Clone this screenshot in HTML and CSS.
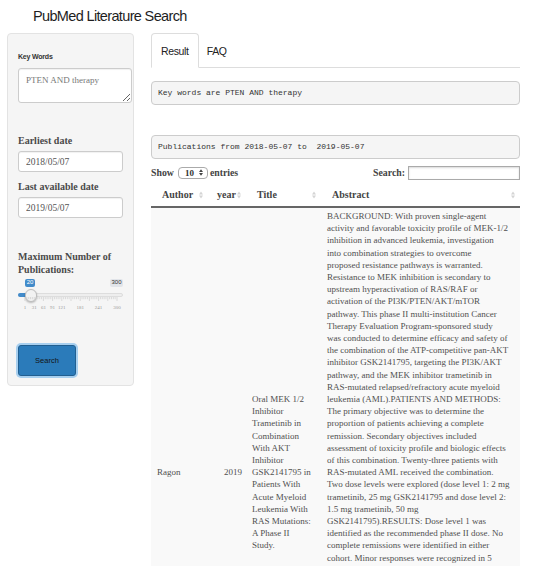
FILE: index.html
```html
<!DOCTYPE html>
<html>
<head>
<meta charset="utf-8">
<title>PubMed Literature Search</title>
<link rel="stylesheet" href="styles.css">
</head>
<body>
<div class="title">PubMed Literature Search</div>
<div class="layout">
  <aside class="well">
    <label class="lbl-sans">Key Words</label>
    <textarea class="kw">PTEN AND therapy</textarea>
    <label class="lbl first">Earliest date</label>
    <input class="date" type="text" value="2018/05/07">
    <label class="lbl">Last available date</label>
    <input class="date" type="text" value="2019/05/07">
    <label class="lbl max">Maximum Number of Publications:</label>
    <div class="slider">
      <span class="badge from">20</span>
      <span class="badge maxv">300</span>
      <span class="track"></span>
      <span class="bar"></span>
      <span class="handle"></span>
      <svg class="grid" width="105" height="14" viewBox="0 0 105 14">
        <g stroke="#cfcfcf" stroke-width="0.7">
          <line x1="7" y1="0" x2="7" y2="4"/><line x1="8.84" y1="0" x2="8.84" y2="2.2"/><line x1="10.68" y1="0" x2="10.68" y2="2.2"/><line x1="12.52" y1="0" x2="12.52" y2="2.2"/><line x1="14.36" y1="0" x2="14.36" y2="2.2"/>
          <line x1="16.2" y1="0" x2="16.2" y2="4"/><line x1="18.04" y1="0" x2="18.04" y2="2.2"/><line x1="19.88" y1="0" x2="19.88" y2="2.2"/><line x1="21.72" y1="0" x2="21.72" y2="2.2"/><line x1="23.56" y1="0" x2="23.56" y2="2.2"/>
          <line x1="25.4" y1="0" x2="25.4" y2="4"/><line x1="27.24" y1="0" x2="27.24" y2="2.2"/><line x1="29.08" y1="0" x2="29.08" y2="2.2"/><line x1="30.92" y1="0" x2="30.92" y2="2.2"/><line x1="32.76" y1="0" x2="32.76" y2="2.2"/>
          <line x1="34.6" y1="0" x2="34.6" y2="4"/><line x1="36.44" y1="0" x2="36.44" y2="2.2"/><line x1="38.28" y1="0" x2="38.28" y2="2.2"/><line x1="40.12" y1="0" x2="40.12" y2="2.2"/><line x1="41.96" y1="0" x2="41.96" y2="2.2"/>
          <line x1="43.8" y1="0" x2="43.8" y2="4"/><line x1="45.64" y1="0" x2="45.64" y2="2.2"/><line x1="47.48" y1="0" x2="47.48" y2="2.2"/><line x1="49.32" y1="0" x2="49.32" y2="2.2"/><line x1="51.16" y1="0" x2="51.16" y2="2.2"/>
          <line x1="53" y1="0" x2="53" y2="4"/><line x1="54.84" y1="0" x2="54.84" y2="2.2"/><line x1="56.68" y1="0" x2="56.68" y2="2.2"/><line x1="58.52" y1="0" x2="58.52" y2="2.2"/><line x1="60.36" y1="0" x2="60.36" y2="2.2"/>
          <line x1="62.2" y1="0" x2="62.2" y2="4"/><line x1="64.04" y1="0" x2="64.04" y2="2.2"/><line x1="65.88" y1="0" x2="65.88" y2="2.2"/><line x1="67.72" y1="0" x2="67.72" y2="2.2"/><line x1="69.56" y1="0" x2="69.56" y2="2.2"/>
          <line x1="71.4" y1="0" x2="71.4" y2="4"/><line x1="73.24" y1="0" x2="73.24" y2="2.2"/><line x1="75.08" y1="0" x2="75.08" y2="2.2"/><line x1="76.92" y1="0" x2="76.92" y2="2.2"/><line x1="78.76" y1="0" x2="78.76" y2="2.2"/>
          <line x1="80.6" y1="0" x2="80.6" y2="4"/><line x1="82.44" y1="0" x2="82.44" y2="2.2"/><line x1="84.28" y1="0" x2="84.28" y2="2.2"/><line x1="86.12" y1="0" x2="86.12" y2="2.2"/><line x1="87.96" y1="0" x2="87.96" y2="2.2"/>
          <line x1="89.8" y1="0" x2="89.8" y2="4"/><line x1="91.64" y1="0" x2="91.64" y2="2.2"/><line x1="93.48" y1="0" x2="93.48" y2="2.2"/><line x1="95.32" y1="0" x2="95.32" y2="2.2"/><line x1="97.16" y1="0" x2="97.16" y2="2.2"/>
          <line x1="99" y1="0" x2="99" y2="4"/>
        </g>
        <g class="gl" text-anchor="middle">
          <text x="7" y="12">1</text>
          <text x="16.2" y="12">31</text>
          <text x="25.4" y="12">61</text>
          <text x="34.6" y="12">91</text>
          <text x="43.8" y="12">121</text>
          <text x="62.2" y="12">181</text>
          <text x="80.6" y="12">241</text>
          <text x="99" y="12">300</text>
        </g>
      </svg>
    </div>
    <button class="btn" type="button">Search</button>
  </aside>

  <main class="main">
    <nav class="tabs">
      <span class="tab active">Result</span>
      <span class="tab faq">FAQ</span>
    </nav>
    <pre class="verb">Key words are PTEN AND therapy</pre>
    <pre class="verb v2">Publications from 2018-05-07 to  2019-05-07</pre>
    <div class="dt-top">
      <label class="show">Show <span class="sel">10<svg width="4" height="7" viewBox="0 0 4 7"><polygon points="0,3 2,0.3 4,3" fill="#444"/><polygon points="0,4 2,6.7 4,4" fill="#444"/></svg></span> entries</label>
      <label class="search">Search: <input class="sbox" type="text"></label>
    </div>
    <table class="dt">
      <colgroup>
        <col class="c-author">
        <col class="c-year">
        <col class="c-title">
        <col class="c-abs">
      </colgroup>
      <thead>
        <tr>
          <th><div class="th-in"><span>Author</span><svg class="si" width="4" height="8" viewBox="0 0 4 8"><polygon points="0,3.4 2,0.6 4,3.4"/><polygon points="0,4.6 2,7.4 4,4.6"/></svg></div></th>
          <th class="th-year"><div class="th-in"><span>year</span><svg class="si" width="4" height="8" viewBox="0 0 4 8"><polygon points="0,3.4 2,0.6 4,3.4"/><polygon points="0,4.6 2,7.4 4,4.6"/></svg></div></th>
          <th><div class="th-in"><span>Title</span><svg class="si" width="4" height="8" viewBox="0 0 4 8"><polygon points="0,3.4 2,0.6 4,3.4"/><polygon points="0,4.6 2,7.4 4,4.6"/></svg></div></th>
          <th><div class="th-in"><span>Abstract</span><svg class="si" width="4" height="8" viewBox="0 0 4 8"><polygon points="0,3.4 2,0.6 4,3.4"/><polygon points="0,4.6 2,7.4 4,4.6"/></svg></div></th>
        </tr>
      </thead>
      <tbody>
        <tr class="odd">
          <td>Ragon</td>
          <td class="num">2019</td>
          <td class="ttl">Oral MEK 1/2 Inhibitor Trametinib in Combination With AKT Inhibitor GSK2141795 in Patients With Acute Myeloid Leukemia With RAS Mutations: A Phase II Study.</td>
          <td class="abs">BACKGROUND: With proven single-agent<br>
activity and favorable toxicity profile of MEK-1/2<br>
inhibition in advanced leukemia, investigation<br>
into combination strategies to overcome<br>
proposed resistance pathways is warranted.<br>
Resistance to MEK inhibition is secondary to<br>
upstream hyperactivation of RAS/RAF or<br>
activation of the PI3K/PTEN/AKT/mTOR<br>
pathway. This phase II multi-institution Cancer<br>
Therapy Evaluation Program-sponsored study<br>
was conducted to determine efficacy and safety of<br>
the combination of the ATP-competitive pan-AKT<br>
inhibitor GSK2141795, targeting the PI3K/AKT<br>
pathway, and the MEK inhibitor trametinib in<br>
RAS-mutated relapsed/refractory acute myeloid<br>
leukemia (AML).PATIENTS AND METHODS:<br>
The primary objective was to determine the<br>
proportion of patients achieving a complete<br>
remission. Secondary objectives included<br>
assessment of toxicity profile and biologic effects<br>
of this combination. Twenty-three patients with<br>
RAS-mutated AML received the combination.<br>
Two dose levels were explored (dose level 1: 2 mg<br>
trametinib, 25 mg GSK2141795 and dose level 2:<br>
1.5 mg trametinib, 50 mg<br>
GSK2141795).RESULTS: Dose level 1 was<br>
identified as the recommended phase II dose. No<br>
complete remissions were identified in either<br>
cohort. Minor responses were recognized in 5<br>
patients (22%). The most common grade 3 or<br>
higher treatment-related adverse events were<br>
febrile neutropenia, diarrhea, rash and<br>
mucositis. Pharmacodynamic analysis showed<br>
inhibition of ERK and AKT phosphorylation in a<br>
subset of patients, although this did not<br>
correlate with clinical response.CONCLUSION:<br>
The combination of trametinib and GSK2141795<br>
was associated with substantial toxicity and<br>
did not demonstrate clinical activity sufficient<br>
to warrant further investigation in patients<br>
with RAS-mutated relapsed or refractory acute<br>
myeloid leukemia. Further study of this<br>
combination in AML is not recommended.</td>
        </tr>
      </tbody>
    </table>
  </main>
</div>
</body>
</html>
```

FILE: styles.css
```css
* { box-sizing: border-box; }

html, body {
  margin: 0;
  padding: 0;
  background: #ffffff;
}

body {
  font-family: "Liberation Serif", "DejaVu Serif", serif;
  color: #555555;
}

.title {
  font-family: "Liberation Sans", Arial, sans-serif;
  font-size: 14.5px;
  letter-spacing: -0.65px;
  line-height: 17px;
  color: #1e1e1e;
  padding: 7.5px 0 0 33px;
  height: 33.3px;
}

.layout {
  display: flex;
  align-items: flex-start;
  gap: 17px;
  padding-left: 7px;
}

/* ---------- sidebar ---------- */
.well {
  width: 127px;
  flex: none;
  background: #f5f5f5;
  border: 1px solid #e3e3e3;
  border-radius: 4px;
  padding: 18px 10px 9px 10px;
  display: flex;
  flex-direction: column;
  align-items: flex-start;
}

.lbl-sans {
  display: block;
  font-family: "Liberation Sans", Arial, sans-serif;
  font-weight: bold;
  font-size: 7px;
  letter-spacing: -0.2px;
  line-height: 9px;
  color: #333333;
  margin-bottom: 6.5px;
}

.kw {
  display: block;
  width: 114px;
  height: 35px;
  margin: 0;
  padding: 6px 7px;
  border: 1px solid #cccccc;
  border-radius: 3px;
  background: #ffffff;
  font-family: "Liberation Serif", serif;
  font-size: 9px;
  line-height: 11px;
  color: #777777;
  box-shadow: inset 0 1px 1px rgba(0,0,0,0.06);
}

.lbl {
  display: block;
  font-weight: bold;
  font-size: 10px;
  line-height: 12px;
  color: #4a4a4a;
  margin-top: 8.5px;
  margin-bottom: 4px;
}

.lbl.first {
  margin-top: 32.5px;
  margin-bottom: 3.5px;
}

.lbl.max {
  margin-top: 32.5px;
  line-height: 12.7px;
  margin-bottom: 3px;
  width: 105px;
}

.date {
  display: block;
  width: 105px;
  height: 21.5px;
  margin: 0;
  padding: 0 7px;
  border: 1px solid #cccccc;
  border-radius: 3px;
  background: #ffffff;
  font-family: "Liberation Serif", serif;
  font-size: 9.5px;
  color: #555555;
  box-shadow: inset 0 1px 1px rgba(0,0,0,0.06);
}

/* slider */
.slider {
  position: relative;
  width: 105px;
  height: 33px;
  flex: none;
}

.badge {
  position: absolute;
  top: 0;
  height: 7.5px;
  font-family: "Liberation Sans", Arial, sans-serif;
  font-size: 6px;
  line-height: 7.5px;
  text-align: center;
  border-radius: 2px;
}

.badge.from {
  left: 7px;
  width: 10px;
  background: #428bca;
  color: #ffffff;
}

.badge.maxv {
  left: 92px;
  width: 13px;
  background: #e1e4e9;
  color: #333333;
}

.track {
  position: absolute;
  left: 0;
  top: 13.3px;
  width: 105px;
  height: 4px;
  background: #eeeeee;
  border: 1px solid #dddddd;
  border-radius: 3px;
}

.bar {
  position: absolute;
  left: 0;
  top: 13.3px;
  width: 13px;
  height: 4px;
  background: #428bca;
  border-radius: 2px 0 0 2px;
}

.handle {
  position: absolute;
  left: 7px;
  top: 10px;
  width: 12.3px;
  height: 12.3px;
  border-radius: 50%;
  background: #f2f2f2;
  border: 1px solid #bdbdbd;
  box-shadow: 0 1px 2px rgba(0,0,0,0.25);
}

.grid {
  position: absolute;
  left: 0;
  top: 18px;
}

.gl {
  font-family: "Liberation Serif", serif;
  font-size: 5px;
  fill: #999999;
}

.btn {
  display: block;
  margin-top: 32.6px;
  width: 58px;
  height: 31px;
  padding: 0;
  background: #2b7bba;
  border: 1px solid #215f91;
  border-radius: 3px;
  box-shadow: 0 0 0 2px rgba(102,175,233,0.55);
  font-family: "Liberation Sans", Arial, sans-serif;
  font-size: 7.5px;
  color: #151515;
}

/* ---------- main ---------- */
.main {
  width: 369px;
  flex: none;
}

.tabs {
  display: flex;
  border-bottom: 1px solid #dddddd;
  height: 35px;
}

.tab {
  font-family: "Liberation Sans", Arial, sans-serif;
  font-size: 10.5px;
  letter-spacing: -0.35px;
  line-height: 12px;
  color: #222222;
  padding: 11px 9px 10px 9px;
  border: 1px solid transparent;
  border-radius: 4px 4px 0 0;
  height: 35px;
}

.tab.active {
  border-color: #dddddd;
  border-bottom-color: #ffffff;
  background: #ffffff;
}

.tab.faq {
  padding-left: 7px;
}

.verb {
  margin: 12.4px 0 0 0;
  height: 24px;
  padding: 6px 6px;
  background: #f5f5f5;
  border: 1px solid #cccccc;
  border-radius: 4px;
  font-family: "Liberation Mono", "DejaVu Sans Mono", monospace;
  font-size: 8px;
  line-height: 10px;
  color: #333333;
  white-space: pre;
}

.verb.v2 {
  margin-top: 30.3px;
}

.dt-top {
  display: flex;
  justify-content: space-between;
  align-items: center;
  height: 15px;
  margin-top: 6.5px;
  margin-bottom: 3.5px;
  font-weight: bold;
  font-size: 9.8px;
  color: #444444;
}

.show {
  display: flex;
  align-items: center;
}

.sel {
  display: inline-flex;
  align-items: center;
  justify-content: space-between;
  width: 30px;
  height: 12px;
  margin: 0 2px 0 4px;
  padding: 0 4px 0 6px;
  border: 1px solid #aaaaaa;
  border-radius: 4px;
  background: #ffffff;
  font-size: 9px;
  color: #333333;
}

.search {
  display: flex;
  align-items: center;
  gap: 3px;
}

.sbox {
  width: 112px;
  height: 14.5px;
  margin: 0;
  border: 1px solid #aaaaaa;
  border-radius: 0;
  background: #ffffff;
  box-shadow: inset 0 1px 2px rgba(0,0,0,0.15);
}

/* table */
.dt {
  width: 369px;
  table-layout: fixed;
  border-collapse: collapse;
}

.c-author { width: 57px; }
.c-year { width: 38px; }
.c-title { width: 75px; }
.c-abs { width: 199px; }

.dt th {
  text-align: left;
  font-weight: bold;
  font-size: 10px;
  line-height: 12px;
  color: #444444;
  padding: 5px 5px 5px 11px;
  border-bottom: 2px solid #666666;
}

.dt th.th-year {
  padding-left: 9px;
}

.th-in {
  display: flex;
  justify-content: space-between;
  align-items: center;
}

.si {
  fill: #d4d4d4;
  flex: none;
}

.dt td {
  background: #f9f9f9;
  vertical-align: middle;
  font-size: 9px;
  line-height: 12.2px;
  color: #505050;
  padding: 2px 4px 5px 6px;
}

.dt td.num {
  text-align: right;
}

.dt td.ttl {
  padding-right: 8px;
}

.dt td.abs {
  padding-right: 4px;
}
```
